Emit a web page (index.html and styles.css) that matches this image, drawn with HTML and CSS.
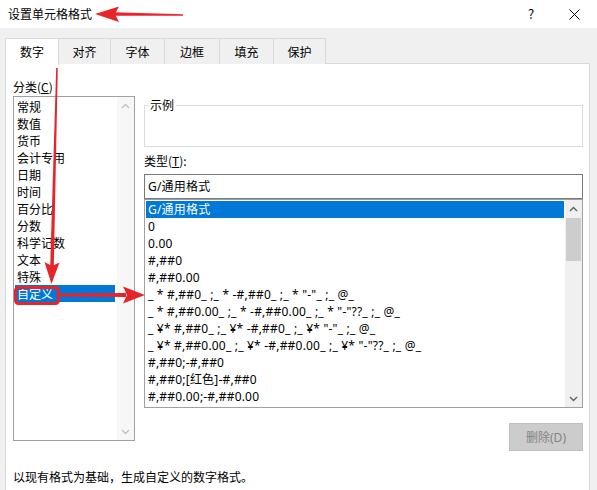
FILE: index.html
```html
<!DOCTYPE html>
<html lang="zh-CN">
<head>
<meta charset="utf-8">
<title>设置单元格格式</title>
<link rel="stylesheet" href="styles.css">
</head>
<body>
<div class="window">
  <div class="titlebar">
    <span class="title">设置单元格格式</span>
    <span class="help">?</span>
    <span class="close"><svg width="11" height="11" viewBox="0 0 11 11"><path d="M0.5 0.5L10.5 10.5M10.5 0.5L0.5 10.5" stroke="#000" stroke-width="1" fill="none"/></svg></span>
  </div>
  <div class="body">
    <div class="tabs">
      <div class="tab active w54">数字</div>
      <div class="tab w53">对齐</div>
      <div class="tab w55">字体</div>
      <div class="tab w56">边框</div>
      <div class="tab w55">填充</div>
      <div class="tab w53">保护</div>
    </div>
    <div class="panel">
      <div class="columns">
        <div class="left">
          <div class="label">分类(<u>C</u>)</div>
          <div class="listbox cat">
            <ul class="items">
              <li>常规</li>
              <li>数值</li>
              <li>货币</li>
              <li>会计专用</li>
              <li>日期</li>
              <li>时间</li>
              <li>百分比</li>
              <li>分数</li>
              <li>科学记数</li>
              <li>文本</li>
              <li>特殊</li>
              <li class="sel">自定义</li>
            </ul>
            <div class="scrollbar">
              <span class="arrow"><svg width="9" height="6" viewBox="0 0 9 6"><path d="M1 5L4.5 1.5L8 5" stroke="#c2c2c2" stroke-width="1.4" fill="none"/></svg></span>
              <span class="track"></span>
              <span class="arrow"><svg width="9" height="6" viewBox="0 0 9 6"><path d="M1 1L4.5 4.5L8 1" stroke="#c2c2c2" stroke-width="1.4" fill="none"/></svg></span>
            </div>
          </div>
        </div>
        <div class="right">
          <fieldset class="sample">
            <legend>示例</legend>
            <div class="sample-body"></div>
          </fieldset>
          <div class="label type">类型(<u>T</u>):</div>
          <div class="input latin">G/通用格式</div>
          <div class="listbox fmt">
            <ul class="items latin">
              <li class="sel">G/通用格式</li>
              <li>0</li>
              <li>0.00</li>
              <li>#,##0</li>
              <li>#,##0.00</li>
              <li>_ * #,##0_ ;_ * -#,##0_ ;_ * "-"_ ;_ @_</li>
              <li>_ * #,##0.00_ ;_ * -#,##0.00_ ;_ * "-"??_ ;_ @_</li>
              <li>_ ¥* #,##0_ ;_ ¥* -#,##0_ ;_ ¥* "-"_ ;_ @_</li>
              <li>_ ¥* #,##0.00_ ;_ ¥* -#,##0.00_ ;_ ¥* "-"??_ ;_ @_</li>
              <li>#,##0;-#,##0</li>
              <li>#,##0;[红色]-#,##0</li>
              <li>#,##0.00;-#,##0.00</li>
            </ul>
            <div class="scrollbar">
              <span class="arrow"><svg width="9" height="6" viewBox="0 0 9 6"><path d="M1 5L4.5 1.5L8 5" stroke="#606060" stroke-width="1.4" fill="none"/></svg></span>
              <span class="track"><span class="thumb"></span></span>
              <span class="arrow"><svg width="9" height="6" viewBox="0 0 9 6"><path d="M1 1L4.5 4.5L8 1" stroke="#606060" stroke-width="1.4" fill="none"/></svg></span>
            </div>
          </div>
          <div class="btnrow"><button class="btn" disabled>删除(D)</button></div>
        </div>
      </div>
      <div class="hint">以现有格式为基础，生成自定义的数字格式。</div>
    </div>
  </div>
  <svg class="annot" width="597" height="490" viewBox="0 0 597 490">
    <g fill="#e8242b" stroke="none">
      <polygon points="183,14.2 183,15.8 114,15.8 114,12.2"/>
      <polygon points="95,14 119,6.5 115,14 119,22"/>
      <polygon points="56.2,68 57.8,68 53.8,266 50.2,266"/>
      <polygon points="51.5,284 44.5,262 52,266 59.5,262.5"/>
      <polygon points="60,293.5 60,296.5 126,297 126,293"/>
      <polygon points="145,295 123,286.5 127,295 123,303.5"/>
    </g>
    <g fill="none" stroke="#e8242b" stroke-width="3">
      <rect x="10.5" y="39.5" width="41" height="23" rx="3"/>
      <rect x="15.5" y="287.5" width="43" height="16" rx="3"/>
    </g>
  </svg>
</div>
</body>
</html>
```

FILE: styles.css
```css
* { box-sizing: border-box; }
html, body { margin: 0; padding: 0; }
body {
  width: 597px;
  height: 490px;
  overflow: hidden;
  background: #f0f0f0;
  font-family: "Noto Sans CJK SC", "Noto Sans", sans-serif;
  font-size: 12px;
  color: #000;
}
.window {
  position: relative;
  width: 597px;
  height: 490px;
}
.titlebar {
  height: 28px;
  background: #fff;
  display: flex;
  align-items: center;
  padding-left: 8px;
  padding-right: 17px;
}
.title { font-size: 12px; line-height: 16px; }
.help {
  margin-left: auto;
  width: 14px;
  text-align: center;
  font-size: 13px;
  line-height: 16px;
}
.close {
  margin-left: 31px;
  width: 11px;
  height: 11px;
  display: flex;
}
.body { padding: 10px 7px 0 5px; }
.tabs {
  display: flex;
  height: 26px;
  margin-bottom: -1px;
  position: relative;
  z-index: 1;
}
.tab {
  height: 26px;
  border: 1px solid #d9d9d9;
  border-bottom: none;
  margin-left: -1px;
  background: #f0f0f0;
  display: flex;
  align-items: center;
  justify-content: center;
  line-height: 16px;
}
.tab:first-child { margin-left: 0; }
.tab.active { background: #fff; height: 27px; }
.w53 { width: 53px; }
.w54 { width: 54px; }
.w55 { width: 55px; }
.w56 { width: 56px; }
.panel {
  background: #fff;
  border: 1px solid #d9d9d9;
  height: 440px;
  padding: 14px 6px 0 7px;
}
.columns {
  display: flex;
  gap: 9px;
}
.left { width: 122px; }
.right { flex: 1; display: flex; flex-direction: column; }
.label { line-height: 18px; height: 18px; }
u { text-decoration: underline; text-underline-offset: 1px; }
.latin { font-family: "Noto Sans", "Noto Sans CJK SC", sans-serif; letter-spacing: 0.2px; }
.listbox {
  display: flex;
  border: 1px solid #a0a0a0;
  background: #fff;
}
.listbox.cat { height: 345px; }
.listbox.fmt { height: 209px; }
.items {
  list-style: none;
  margin: 0;
  padding: 1px;
  flex: 1;
  overflow: hidden;
}
.items li {
  height: 17px;
  line-height: 17px;
  padding-left: 2px;
  white-space: nowrap;
}
.fmt .items li { padding-top: 1px; line-height: 16px; }
.items li.sel { background: #0078d7; color: #fff; }
.cat .items li.sel { margin-right: 1px; }
.scrollbar {
  width: 17px;
  background: #f0f0f0;
  display: flex;
  flex-direction: column;
}
.cat .scrollbar { background: #f7f7f7; }
.arrow {
  height: 17px;
  display: flex;
  align-items: center;
  justify-content: center;
}
.track { flex: 1; position: relative; }
.thumb {
  display: block;
  margin: 1px 1px 0 1px;
  height: 43px;
  background: #cdcdcd;
}
.sample {
  margin: 19px 0 0 0;
  padding: 0;
  border: 1px solid #dcdcdc;
  min-width: 0;
}
.sample legend {
  margin-left: 4px;
  padding: 0 2px 0 1px;
  line-height: 16px;
  font-size: 12px;
}
.sample-body { height: 33px; }
.label.type { margin-top: 6px; line-height: 16px; height: 16px; }
.input {
  margin-top: 5px;
  height: 25px;
  border: 1px solid #7a7a7a;
  padding-left: 3px;
  line-height: 23px;
}
.btnrow {
  display: flex;
  justify-content: flex-end;
  margin-top: 15px;
}
.btn {
  width: 74px;
  height: 28px;
  border: 1px solid #bfbfbf;
  background: #cccccc;
  color: #838383;
  font-family: "Noto Sans", "Noto Sans CJK SC", sans-serif;
  font-size: 12px;
  padding: 0;
}
.hint {
  margin-top: 18px;
  line-height: 16px;
}
.annot {
  position: absolute;
  left: 0;
  top: 0;
  pointer-events: none;
}
```
